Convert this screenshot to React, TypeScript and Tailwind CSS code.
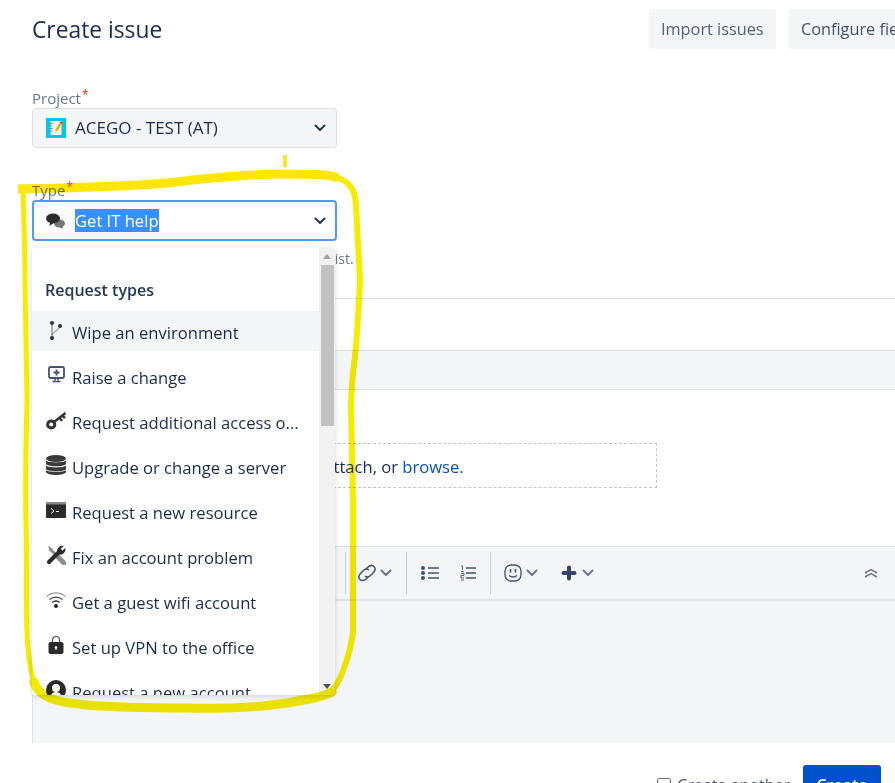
import { ReactNode } from "react";

const Chevron = ({ className = "text-[#253858]" }: { className?: string }) => (
  <svg width="12" height="8" viewBox="0 0 12 8" fill="none" className={className}>
    <path d="M1.5 1.5 6 6l4.5-4.5" stroke="currentColor" strokeWidth="2" strokeLinecap="round" strokeLinejoin="round" />
  </svg>
);

const Branch = () => (
  <svg width="20" height="20" viewBox="0 0 20 20" fill="none">
    <path d="M6 3v15M14 6c-.5 4-6 5-8 9" stroke="#6b6b6b" strokeWidth="1" />
    <circle cx="6" cy="3" r="2.1" fill="#333" />
    <circle cx="14" cy="6" r="2.1" fill="#333" />
    <circle cx="6" cy="18" r="2.1" fill="#333" />
  </svg>
);

const Monitor = () => (
  <svg width="20" height="20" viewBox="0 0 20 20" fill="none">
    <rect x="3" y="2" width="15" height="11" rx="1.5" stroke="#42526e" strokeWidth="1.8" />
    <path d="M10.5 4.5v6M7.5 7.5h6" stroke="#42526e" strokeWidth="1.8" />
    <path d="M9 13v2.5M12 13v2.5M6.5 16.5h8" stroke="#42526e" strokeWidth="1.6" />
  </svg>
);

const Key = () => (
  <svg width="20" height="20" viewBox="0 0 20 20" fill="none">
    <circle cx="5.2" cy="14.5" r="3.6" stroke="#333" strokeWidth="3" />
    <path d="M8 12 19.5 3M13.500 8l2.600 2.800M16.500 5.500l2.400 2.600" stroke="#333" strokeWidth="2.500" />
  </svg>
);

const Database = () => (
  <svg width="20" height="20" viewBox="0 0 20 20">
    <ellipse cx="10" cy="3.500" rx="10" ry="3.500" fill="#3a3a3a" />
    <path d="M0 5.500c2 2.500 18 2.500 20 0v3.500c-1 3-19 3-20 0z" fill="#3a3a3a" />
    <path d="M0 10.500c2 2.500 18 2.500 20 0v3.500c-1 3-19 3-20 0z" fill="#3a3a3a" />
    <path d="M0 15c2 2.500 18 2.500 20 0v2c-1 4-19 4-20 0z" fill="#3a3a3a" />
  </svg>
);

const Terminal = () => (
  <svg width="20" height="16" viewBox="0 0 20 16" fill="none">
    <rect width="20" height="16" rx="1" fill="#2b2b2b" />
    <rect width="20" height="2.5" fill="#8a8a8a" />
    <path d="M5 6.5 8 9l-3 2.5M10 9.5h3" stroke="#fff" strokeWidth="1" />
  </svg>
);

const Tools = () => (
  <svg width="20" height="20" viewBox="0 0 20 20" fill="none">
    <path d="M2 1 6.500 3.500 5.500 5.500 3.500 6z" fill="#8c8c8c" />
    <path d="M4 4l9 9" stroke="#8c8c8c" strokeWidth="3" />
    <path d="M12 12l6 6" stroke="#8c8c8c" strokeWidth="4.600" strokeLinecap="round" />
    <path d="M3 17 13 7" stroke="#2a2a2a" strokeWidth="4" strokeLinecap="round" />
    <path d="M11 6c.2-3.500 3.800-6 6.800-5l-3 2.700 1.600 2 2.900-2.700c1 3.500-2.400 7.400-6.100 6.500z" fill="#2a2a2a" />
  </svg>
);

const Wifi = () => (
  <svg width="20" height="20" viewBox="0 0 20 20" fill="none">
    <path d="M.5 6.500c5-4.800 14-4.800 19 0" stroke="#777" strokeWidth="1" />
    <path d="M3.500 9.500c3.800-3.200 9.200-3.200 13 0" stroke="#444" strokeWidth="1.200" />
    <path d="M6.200 12.500c2.300-1.800 5.300-1.800 7.600 0" stroke="#333" strokeWidth="1.400" />
    <circle cx="10" cy="16" r="2" fill="#222" />
  </svg>
);

const Lock = () => (
  <svg width="20" height="20" viewBox="0 0 20 20" fill="none">
    <path d="M6.500 8V5a3.500 3.500 0 0 1 7 0v3" stroke="#555" strokeWidth="1.200" />
    <rect x="2.500" y="7" width="15" height="12" rx="2" fill="#2b2b2b" />
    <circle cx="10" cy="12.500" r="1.300" fill="#fff" />
    <path d="M10 13v2" stroke="#fff" strokeWidth="1" />
  </svg>
);

const Account = () => (
  <svg width="20" height="20" viewBox="0 0 20 20">
    <circle cx="10" cy="10" r="10" fill="#2b2b2b" />
    <circle cx="10" cy="8" r="4" fill="#fff" />
    <path d="M4 18c.5-4 3-6 6-6s5.500 2 6 6z" fill="#fff" />
  </svg>
);

const Chat = () => (
  <svg width="20" height="16" viewBox="0 0 20 16">
    <ellipse cx="13.500" cy="10.500" rx="5.500" ry="4" fill="#777" />
    <path d="M16 13.500l1.500 2.300-4-1.300z" fill="#777" />
    <ellipse cx="7" cy="5.500" rx="7" ry="5" fill="#2b2b2b" />
    <path d="M4 9.500 3.500 13l4-3z" fill="#2b2b2b" />
  </svg>
);

const ProjectIcon = () => (
  <svg width="20" height="20" viewBox="0 0 20 20">
    <rect width="20" height="20" fill="#00c7e6" />
    <rect x="4.500" y="3" width="11" height="14" rx="1" fill="#fff" />
    <path d="M3.500 5.500h3M3.500 8h3M3.500 10.500h3M3.500 13h3" stroke="#5e6c84" strokeWidth="0.9" />
    <path d="M14.500 3.500l2 1.300-4.700 7.700-2.300 1.500.2-2.700z" fill="#ffab00" />
    <path d="M14.500 3.500l2 1.300-.8 1.300-2-1.300z" fill="#de350b" />
  </svg>
);

const items: { label: string; icon: ReactNode; active?: boolean }[] = [
  { label: "Wipe an environment", icon: <Branch />, active: true },
  { label: "Raise a change", icon: <Monitor /> },
  { label: "Request additional access o...", icon: <Key /> },
  { label: "Upgrade or change a server", icon: <Database /> },
  { label: "Request a new resource", icon: <Terminal /> },
  { label: "Fix an account problem", icon: <Tools /> },
  { label: "Get a guest wifi account", icon: <Wifi /> },
  { label: "Set up VPN to the office", icon: <Lock /> },
  { label: "Request a new account", icon: <Account /> },
];

const Separator = () => <div className="h-[42px] w-px bg-[#c9ccd2]" />;

function TypeMenu() {
  return (
    <div className="absolute left-0 top-[48px] z-10 flex h-[447px] w-[303px] overflow-hidden rounded-[3px] bg-white shadow-[0_1px_5px_rgba(9,30,66,0.18)]">
      <div className="min-w-0 flex-1">
        <div className="pl-[13px] pt-[31px] text-[16px] font-semibold leading-[22px] text-[#253858]">Request types</div>
        <div className="mt-[10px] flex flex-col gap-[5px]">
          {items.map((item) => (
            <div key={item.label} className={`flex h-[40px] items-center whitespace-nowrap pl-[14px] text-[16.6px] text-[#172b4d] ${item.active ? "bg-[#f4f5f7]" : ""}`}>
              <span className="-mt-[3px] flex w-[26px] shrink-0">{item.icon}</span>
              <span className="pt-[4px]">{item.label}</span>
            </div>
          ))}
        </div>
      </div>
      <div className="flex w-[16px] shrink-0 flex-col items-center bg-[#f1f1f1]">
        <div className="mt-[6px] h-0 w-0 border-x-[4px] border-b-[5px] border-x-transparent border-b-[#a3a3a3]" />
        <div className="mt-[6px] h-[161px] w-[13px] bg-[#c1c1c1]" />
        <div className="mt-auto mb-[6px] h-0 w-0 border-x-[4px] border-t-[5px] border-x-transparent border-t-[#505050]" />
      </div>
    </div>
  );
}

function Highlight() {
  return (
    <svg className="pointer-events-none absolute inset-0 z-20 mix-blend-multiply" width="895" height="783" viewBox="0 0 895 783" fill="none">
      <path d="M285 155v12" stroke="#ffe600" strokeWidth="3.500" />
      <path d="M18 189C70 188 130 186 167 183C210 178 250 174 283 174C310 174 328 174 338 178" stroke="#ffe600" strokeWidth="9" />
      <path d="M338 178C350 182 355 190 356 205L360 280C359 300 358 320 357 333C356 350 354 365 353 373C352 385 351 395 351 407L353 500L353 633C351 645 349 655 345 665C342 675 338 685 330 693" stroke="#f6ec00" strokeWidth="6" strokeLinecap="round" />
      <path d="M23 190C24 220 25 250 25 280L27 400C26 440 25 480 26 520C27 570 26 610 27 633C28 655 30 670 34 682" stroke="#f6ec00" strokeWidth="5" />
      <path d="M34 682C38 695 50 702 87 705C120 708 150 708 187 708C220 709 260 707 287 703C310 699 322 697 332 692" stroke="#f3ea00" strokeWidth="9" strokeLinecap="round" />
    </svg>
  );
}

export default function App() {
  return (
    <div className="relative h-[783px] w-[895px] overflow-hidden bg-white font-['Open_Sans',sans-serif] text-[#172b4d]">
      <div className="flex h-[49px] w-[960px] items-end pl-[32px]">
        <h1 className="mb-[1px] w-[130px] whitespace-nowrap text-[22.8px] font-normal leading-[36px] text-[#172b4d]">Create issue</h1>
        <div className="ml-[487px] flex gap-[13px] text-[16.3px]">
          <div className="flex h-[40px] w-[127px] items-center rounded-[3px] bg-[#f4f5f7] pl-[12px] text-[#505f79]">Import issues</div>
          <div className="flex h-[40px] w-[139px] items-center whitespace-nowrap rounded-[3px] bg-[#f4f5f7] pl-[12px] text-[#42526e]">Configure fields</div>
        </div>
      </div>

      <div className="pl-[32px]">
        <div className="mt-[39px]">
          <div className="h-[20px] text-[15px] leading-[20px] text-[#6b778c]">
            Project<span className="relative -top-[5px] ml-px text-[12px] text-[#de350b]">*</span>
          </div>
          <div className="flex h-[40px] w-[305px] items-center rounded-[4px] border border-[#dfe1e6] bg-[#f4f5f7] pl-[13px] pr-[10px] text-[17px]">
            <ProjectIcon />
            <span className="ml-[9px]">ACEGO - TEST (AT)</span>
            <span className="ml-auto"><Chevron /></span>
          </div>
        </div>

        <div className="relative mt-[32px]">
          <div className="h-[20px] text-[15px] leading-[20px] text-[#6b778c]">
            Type<span className="relative -top-[5px] ml-px text-[12px] text-[#de350b]">*</span>
          </div>
          <div className="relative">
            <div className="flex h-[41px] w-[305px] items-center rounded-[4px] border-2 border-[#4c9aff] bg-white pl-[12px] pr-[9px] text-[16.6px]">
              <Chat />
              <span className="ml-[9px] bg-[#3a8fff] leading-[23px] text-white">Get IT help</span>
              <span className="ml-auto"><Chevron /></span>
            </div>
            <TypeMenu />
          </div>
          <p className="mt-[8px] h-[20px] w-[330px] whitespace-nowrap text-[14px] leading-[20px] text-[#6b778c]">
            Start typing, or select a request type from the list.
          </p>
        </div>

        <div className="mt-[29px] h-px bg-[#dfe1e6]" />
        <div className="mt-[51px] h-[40px] border-y border-[#dfe1e6] bg-[#f4f5f7]" />

        <div className="mt-[53px] flex h-[45px] w-[625px] items-center justify-center border border-dashed border-[#c1c7d0] pt-[3px] text-[16.6px]">
          <span>
            Drop files to attach, or <span className="text-[#0052cc]">browse.</span>
          </span>
        </div>

        <div className="mt-[58px] border-l border-[#dfe1e6]">
          <div className="flex h-[55px] items-center border-t border-b-2 border-[#dfe1e6] bg-[#f4f5f7] text-[#42526e]">
            <div className="ml-[312px]"><Separator /></div>
            <div className="ml-[11px] flex items-center gap-[3px]">
              <svg width="20" height="20" viewBox="0 0 20 20" fill="none" stroke="#42526e" strokeWidth="1.500">
                <path d="M8.500 6.500 11 4c2-2 4.500-2 6 -.5s1.300 4-.5 6L13.500 12.500c-1.800 1.800-4 1.800-5.500 .5" />
                <path d="M11.500 13.500 9 16c-2 2-4.500 2-6 .5s-1.300-4 .5-6L6.500 7.500c1.800-1.800 4-1.800 5.500-.5" />
              </svg>
              <Chevron className="text-[#6b778c]" />
            </div>
            <div className="ml-[14px]"><Separator /></div>
            <svg className="ml-[14px]" width="18" height="16" viewBox="0 0 18 16" fill="none">
              <circle cx="2" cy="3" r="2" fill="#42526e" /><circle cx="2" cy="8" r="2" fill="#42526e" /><circle cx="2" cy="13" r="2" fill="#42526e" />
              <path d="M7 3h11M7 8h11M7 13h11" stroke="#42526e" strokeWidth="1.300" />
            </svg>
            <svg className="ml-[21px]" width="16" height="16" viewBox="0 0 16 16" fill="none" stroke="#42526e">
              <path d="M1 1h1.500v4M1 6.500h3M1 8.500h3v2H1v2.500h3M1 15h3" strokeWidth="0.900" />
              <path d="M6 3h10M6 8h10M6 13h10" strokeWidth="1.300" />
            </svg>
            <div className="ml-[14px]"><Separator /></div>
            <div className="ml-[13px] flex items-center gap-[4px]">
              <svg width="18" height="18" viewBox="0 0 18 18" fill="none" stroke="#42526e" strokeWidth="1.300">
                <rect x="1" y="1" width="16" height="16" rx="6" />
                <path d="M6.500 5v3.500M11.500 5v3.500" strokeWidth="1.600" />
                <path d="M5 11.500c2 2 6 2 8 0" />
              </svg>
              <Chevron className="text-[#6b778c]" />
            </div>
            <div className="ml-[23px] flex items-center gap-[5px]">
              <svg width="16" height="16" viewBox="0 0 16 16" fill="none" stroke="#344563" strokeWidth="4" strokeLinecap="round">
                <path d="M8 2.500v11M2.500 8h11" />
              </svg>
              <Chevron className="text-[#6b778c]" />
            </div>
            <svg className="ml-auto mr-[17px]" width="14" height="10" viewBox="0 0 14 10" fill="none" stroke="#6b778c" strokeWidth="1.500">
              <path d="M1 5l6-3.500L13 5M1 9l6-3.500L13 9" />
            </svg>
          </div>
          <div className="h-[142px] bg-[#f4f5f7]" />
        </div>

        <div className="mt-[22px] flex h-[40px] items-center justify-end pr-[14px]">
          <span className="h-[14px] w-[14px] rounded-[2px] border border-[#767676] bg-white" />
          <span className="ml-[6px] mr-[13px] text-[16px] text-[#42526e]">Create another</span>
          <div className="flex h-[40px] w-[78px] items-center justify-center rounded-[3px] bg-[#0052cc] text-[16px] font-semibold text-white">Create</div>
        </div>
      </div>

      <Highlight />
    </div>
  );
}
